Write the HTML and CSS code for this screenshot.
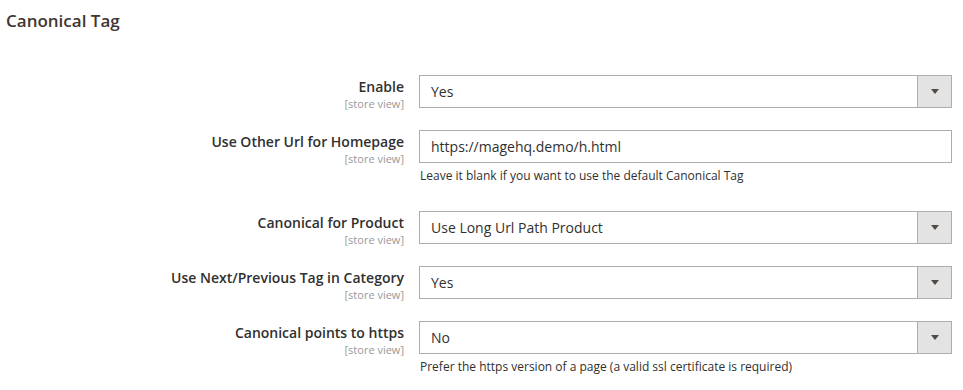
FILE: index.html
```html
<!DOCTYPE html>
<html lang="en">
<head>
  <meta charset="UTF-8" />
  <meta name="viewport" content="width=device-width, initial-scale=1.0"/>
  <title>Canonical Tag</title>
  <link rel="stylesheet" href="styles.css">
</head>
<body>

  <div class="section">
    <div class="section-title">Canonical Tag</div>

    <div class="fields">
      <div class="field">
        <div class="label">Enable<span class="scope">[store view]</span></div>
        <div class="control">
          <div class="select"><span class="value">Yes</span><span class="arrow"></span></div>
        </div>
      </div>

      <div class="field">
        <div class="label">Use Other Url for Homepage<span class="scope">[store view]</span></div>
        <div class="control">
          <div class="input">https://magehq.demo/h.html</div>
          <div class="note">Leave it blank if you want to use the default Canonical Tag</div>
        </div>
      </div>

      <div class="field">
        <div class="label">Canonical for Product<span class="scope">[store view]</span></div>
        <div class="control">
          <div class="select"><span class="value">Use Long Url Path Product</span><span class="arrow"></span></div>
        </div>
      </div>

      <div class="field">
        <div class="label">Use Next/Previous Tag in Category<span class="scope">[store view]</span></div>
        <div class="control">
          <div class="select"><span class="value">Yes</span><span class="arrow"></span></div>
        </div>
      </div>

      <div class="field">
        <div class="label">Canonical points to https<span class="scope">[store view]</span></div>
        <div class="control">
          <div class="select"><span class="value">No</span><span class="arrow"></span></div>
          <div class="note">Prefer the https version of a page (a valid ssl certificate is required)</div>
        </div>
      </div>
    </div>
  </div>

</body>
</html>
```

FILE: styles.css
```css
body {
  margin: 0;
  font-family: 'Open Sans', 'Liberation Sans', sans-serif;
  color: #303030;
  background: #fff;
}

.section {
  padding: 9px 12px 0 6px;
}

.section-title {
  font-size: 17px;
  font-weight: 600;
  color: #41362f;
  line-height: 23px;
  margin-bottom: 43px;
}

.field {
  display: grid;
  grid-template-columns: 398px 533px;
  column-gap: 15px;
  margin-bottom: 22px;
}

.label {
  text-align: right;
  font-size: 14px;
  font-weight: 600;
  line-height: 17px;
  padding-top: 3px;
  height: 33px;
  box-sizing: border-box;
}

.scope {
  display: block;
  font-size: 11px;
  font-weight: 400;
  color: #999;
  line-height: 12px;
  margin-top: 3px;
}

.select,
.input {
  display: flex;
  height: 33px;
  box-sizing: border-box;
  border: 1px solid #adadad;
  font-size: 14px;
  line-height: 31px;
}

.input {
  padding-left: 11px;
}

.value {
  flex: 1;
  padding-left: 11px;
}

.arrow {
  width: 34px;
  box-sizing: border-box;
  border-left: 1px solid #adadad;
  background: #e3e3e3;
  position: relative;
}

.arrow::after {
  content: "";
  position: absolute;
  left: 13px;
  top: 13px;
  border-left: 4px solid transparent;
  border-right: 4px solid transparent;
  border-top: 5px solid #514943;
}

.note {
  font-size: 12px;
  line-height: 16px;
  margin: 5px 0 5px 1px;
}
```
